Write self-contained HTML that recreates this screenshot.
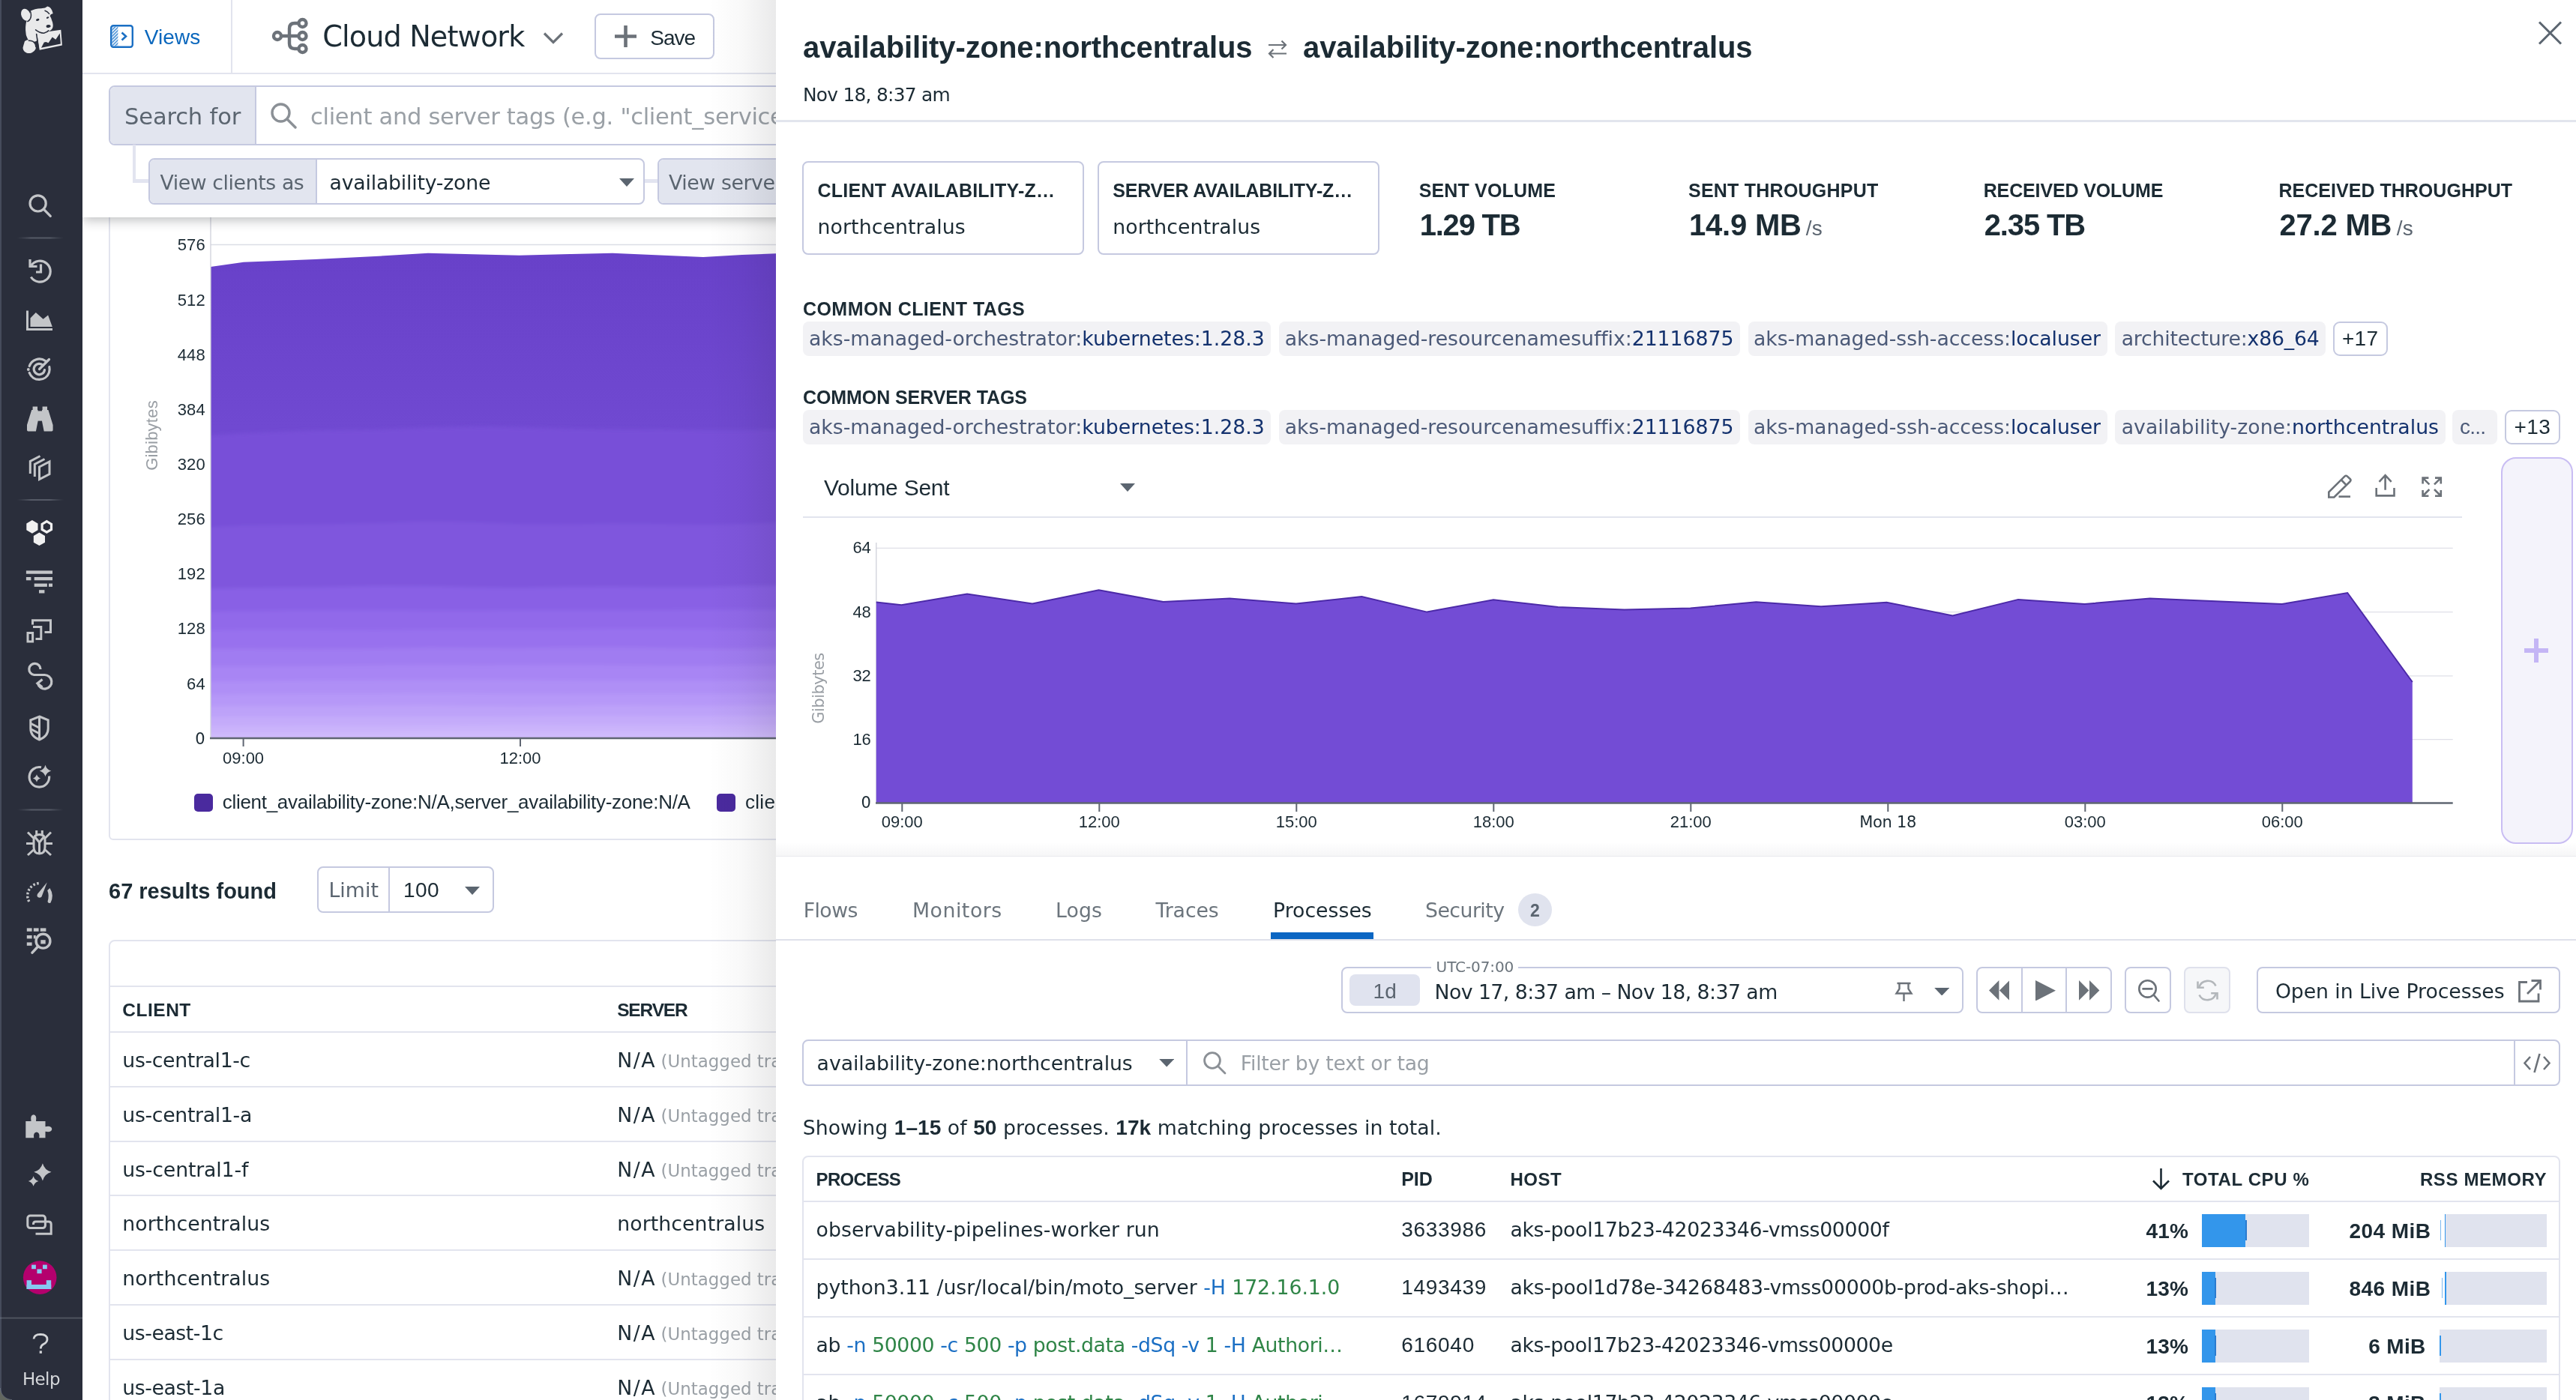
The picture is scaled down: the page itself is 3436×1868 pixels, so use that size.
<!DOCTYPE html>
<html lang="en"><head><meta charset="utf-8"><title>Cloud Network - availability-zone:northcentralus</title>
<style>

html,body{margin:0;padding:0;background:#fff;}
body{width:3436px;height:1868px;overflow:hidden;position:relative;font-family:"DejaVu Sans","Liberation Sans",sans-serif;color:#1c2b34;}
#app{position:absolute;left:0;top:0;width:3436px;height:1868px;overflow:hidden;will-change:transform;}
#app div,#app span.t,#app svg{position:absolute;box-sizing:border-box;}
span.t{white-space:pre;}
span.t span{position:static;}
i.bl{display:inline-block;width:0;height:0;vertical-align:baseline;}
span.t b{font-family:"Liberation Sans",sans-serif;font-size:1.05em;font-weight:700;}
.bd{border:2px solid #c5c9e0;border-radius:8px;background:#fff;}
.lbl{background:#e2e5ef;}
.hl{background:#e2e4ee;height:2px;}
.pill{background:#f2f2f5;border-radius:8px;height:45px;}

</style></head>
<body>
<div id="app">
<div id="main" style="left:110px;top:0;width:925px;height:1868px;overflow:hidden;background:#fff;">
<div style="left:35px;top:270px;width:1400px;height:850.6px;border:2px solid #e2e4ee;border-radius:0 0 6px 6px;background:#fff;"></div>
<svg style="left:0;top:280px" width="925" height="760" viewBox="110 280 925 760"><line x1="281" y1="326.5" x2="1100" y2="326.5" stroke="#dcdde5" stroke-width="1.3"/><defs><linearGradient id="g1" x1="0" y1="0" x2="0" y2="1"><stop offset="0" stop-color="#6841c9"/><stop offset=".36" stop-color="#7049d1"/><stop offset="1" stop-color="#7049d1"/></linearGradient></defs><defs><filter id="bl" x="-5%" y="-5%" width="110%" height="110%"><feGaussianBlur stdDeviation="2.6"/></filter><clipPath id="cc"><rect x="281" y="300" width="800" height="685"/></clipPath></defs><path d="M281.0,356.0 L325.0,349.8 L420.0,346.0 L500.0,342.0 L571.0,337.7 L640.0,339.5 L692.5,340.7 L760.0,339.0 L817.0,337.7 L880.0,340.5 L938.0,343.0 L990.0,340.0 L1040.0,338.0 L1040,985 L281,985 Z" fill="url(#g1)"/><g clip-path="url(#cc)"><g filter="url(#bl)"><path d="M240.0,579.9 L281.0,580.9 L325.0,578.1 L420.0,574.4 L500.0,573.5 L571.0,570.6 L640.0,568.9 L692.5,569.9 L760.0,572.3 L817.0,573.1 L880.0,573.3 L938.0,574.1 L990.0,574.0 L1040.0,573.6 L1090.0,572.0 L1090,1030 L240,1030 Z" fill="#7850d8"/><path d="M240.0,704.7 L281.0,703.7 L325.0,701.2 L420.0,700.3 L500.0,698.6 L571.0,696.1 L640.0,697.6 L692.5,699.7 L760.0,700.0 L817.0,698.9 L880.0,699.4 L938.0,700.7 L990.0,699.6 L1040.0,697.6 L1090.0,696.2 L1090,1030 L240,1030 Z" fill="#7f57dd"/><path d="M240.0,785.9 L281.0,785.5 L325.0,784.5 L420.0,783.8 L500.0,782.1 L571.0,782.3 L640.0,784.1 L692.5,784.4 L760.0,783.3 L817.0,783.0 L880.0,783.8 L938.0,783.7 L990.0,782.0 L1040.0,781.2 L1090.0,781.7 L1090,1030 L240,1030 Z" fill="#8961e5"/><path d="M240.0,816.0 L281.0,816.3 L325.0,815.5 L420.0,814.2 L500.0,814.3 L571.0,815.0 L640.0,815.1 L692.5,814.6 L760.0,814.2 L817.0,814.2 L880.0,814.0 L938.0,813.5 L990.0,813.1 L1040.0,813.6 L1090.0,814.5 L1090,1030 L240,1030 Z" fill="#9169ea"/><path d="M240.0,841.1 L281.0,841.1 L325.0,840.0 L420.0,840.0 L500.0,840.7 L571.0,839.8 L640.0,839.3 L692.5,839.4 L760.0,839.3 L817.0,838.6 L880.0,838.4 L938.0,839.1 L990.0,839.6 L1040.0,839.8 L1090.0,839.7 L1090,1030 L240,1030 Z" fill="#9871ee"/><path d="M240.0,865.9 L281.0,865.7 L325.0,865.2 L420.0,866.0 L500.0,865.3 L571.0,864.1 L640.0,864.3 L692.5,864.5 L760.0,863.8 L817.0,863.4 L880.0,864.3 L938.0,865.3 L990.0,865.2 L1040.0,864.7 L1090.0,864.4 L1090,1030 L240,1030 Z" fill="#a07bf1"/><path d="M240.0,888.8 L281.0,889.0 L325.0,889.0 L420.0,888.6 L500.0,887.5 L571.0,887.1 L640.0,887.4 L692.5,887.2 L760.0,887.0 L817.0,887.4 L880.0,888.2 L938.0,888.4 L990.0,887.8 L1040.0,887.5 L1090.0,887.6 L1090,1030 L240,1030 Z" fill="#a885f4"/><path d="M240.0,909.3 L281.0,909.6 L325.0,909.0 L420.0,907.8 L500.0,907.4 L571.0,907.2 L640.0,907.1 L692.5,907.2 L760.0,907.8 L817.0,908.1 L880.0,908.1 L938.0,907.9 L990.0,907.5 L1040.0,907.5 L1090.0,907.4 L1090,1030 L240,1030 Z" fill="#af8ff6"/><path d="M240.0,927.5 L281.0,927.2 L325.0,926.2 L420.0,925.6 L500.0,925.6 L571.0,925.1 L640.0,925.4 L692.5,926.0 L760.0,926.2 L817.0,925.8 L880.0,925.5 L938.0,925.7 L990.0,925.6 L1040.0,925.2 L1090.0,924.8 L1090,1030 L240,1030 Z" fill="#b698f8"/><path d="M240.0,942.8 L281.0,942.4 L325.0,941.8 L420.0,942.0 L500.0,941.5 L571.0,941.3 L640.0,942.1 L692.5,942.4 L760.0,941.7 L817.0,941.1 L880.0,941.4 L938.0,941.7 L990.0,941.2 L1040.0,940.8 L1090.0,941.0 L1090,1030 L240,1030 Z" fill="#bda2f9"/><path d="M240.0,956.2 L281.0,956.4 L325.0,956.2 L420.0,956.0 L500.0,955.8 L571.0,956.0 L640.0,956.1 L692.5,955.7 L760.0,955.1 L817.0,955.1 L880.0,955.5 L938.0,955.4 L990.0,955.1 L1040.0,955.3 L1090.0,955.9 L1090,1030 L240,1030 Z" fill="#c4abfa"/><path d="M240.0,968.7 L281.0,969.0 L325.0,968.5 L420.0,968.1 L500.0,968.4 L571.0,967.9 L640.0,967.3 L692.5,967.1 L760.0,967.3 L817.0,967.2 L880.0,967.3 L938.0,967.6 L990.0,967.8 L1040.0,968.1 L1090.0,968.1 L1090,1030 L240,1030 Z" fill="#cab3fb"/><path d="M240.0,978.1 L281.0,978.1 L325.0,977.5 L420.0,977.6 L500.0,977.2 L571.0,976.0 L640.0,976.0 L692.5,976.4 L760.0,976.4 L817.0,976.1 L880.0,976.6 L938.0,977.4 L990.0,977.3 L1040.0,976.9 L1090.0,976.4 L1090,1030 L240,1030 Z" fill="#cfbafc"/></g></g><line x1="281" y1="280" x2="281" y2="985" stroke="#cfd1da" stroke-width="1.3"/><line x1="280" y1="985" x2="1100" y2="985" stroke="#5f6672" stroke-width="2.5"/><line x1="324.6" y1="985" x2="324.6" y2="996" stroke="#5f6672" stroke-width="2"/><line x1="694" y1="985" x2="694" y2="996" stroke="#5f6672" stroke-width="2"/></svg>
<span class="t" style='left:126.8px;top:316px;font:400 22.0px/22.0px "Liberation Sans","DejaVu Sans",sans-serif;color:#1c2b34;letter-spacing:0.091px;'>576</span>
<span class="t" style='left:126.8px;top:390px;font:400 22.0px/22.0px "Liberation Sans","DejaVu Sans",sans-serif;color:#1c2b34;letter-spacing:0.091px;'>512</span>
<span class="t" style='left:126.8px;top:463px;font:400 22.0px/22.0px "Liberation Sans","DejaVu Sans",sans-serif;color:#1c2b34;letter-spacing:0.091px;'>448</span>
<span class="t" style='left:126.8px;top:536px;font:400 22.0px/22.0px "Liberation Sans","DejaVu Sans",sans-serif;color:#1c2b34;letter-spacing:0.091px;'>384</span>
<span class="t" style='left:126.8px;top:609px;font:400 22.0px/22.0px "Liberation Sans","DejaVu Sans",sans-serif;color:#1c2b34;letter-spacing:0.091px;'>320</span>
<span class="t" style='left:126.8px;top:682px;font:400 22.0px/22.0px "Liberation Sans","DejaVu Sans",sans-serif;color:#1c2b34;letter-spacing:0.091px;'>256</span>
<span class="t" style='left:126.8px;top:755px;font:400 22.0px/22.0px "Liberation Sans","DejaVu Sans",sans-serif;color:#1c2b34;letter-spacing:0.091px;'>192</span>
<span class="t" style='left:126.8px;top:828px;font:400 22.0px/22.0px "Liberation Sans","DejaVu Sans",sans-serif;color:#1c2b34;letter-spacing:0.091px;'>128</span>
<span class="t" style='left:139.1px;top:902px;font:400 22.0px/22.0px "Liberation Sans","DejaVu Sans",sans-serif;color:#1c2b34;letter-spacing:0.116px;'>64</span>
<span class="t" style='left:150.32px;top:975px;font:400 21.01px/21.01px "DejaVu Sans","Liberation Sans",sans-serif;color:#1c2b34;'>0</span>
<span class="t" style='left:46.45px;top:569.8px;font:400 22.0px/22.0px "Liberation Sans","DejaVu Sans",sans-serif;color:#999ea4;letter-spacing:0.223px;transform:rotate(-90deg);transform-origin:50% 50%;'>Gibibytes</span>
<span class="t" style='left:187.1px;top:1000.6px;font:400 22.0px/22.0px "Liberation Sans","DejaVu Sans",sans-serif;color:#1c2b34;letter-spacing:-0.016px;'>09:00</span>
<span class="t" style='left:556.5px;top:1000.6px;font:400 22.0px/22.0px "Liberation Sans","DejaVu Sans",sans-serif;color:#1c2b34;letter-spacing:-0.016px;'>12:00</span>
<div style="left:149px;top:1059px;width:24.8px;height:23.6px;background:#4a2a9e;border-radius:5px;"></div>
<span class="t" style='left:186.7px;top:1057px;font:400 26.0px/26.0px "Liberation Sans","DejaVu Sans",sans-serif;color:#1c2b34;letter-spacing:-0.284px;'>client_availability-zone:N/A,server_availability-zone:N/A</span>
<div style="left:846px;top:1059px;width:24.8px;height:23.6px;background:#4a2a9e;border-radius:5px;"></div>
<span class="t" style='left:884px;top:1057px;font:400 26.0px/26.0px "Liberation Sans","DejaVu Sans",sans-serif;color:#1c2b34;letter-spacing:0.286px;'>client_availability-zone:northcentralus</span>
<span class="t" style='left:35px;top:1174.8px;font:700 29.0px/29.0px "Liberation Sans","DejaVu Sans",sans-serif;color:#1c2b34;'>67 results found</span>
<div class="bd" style="left:313px;top:1156px;width:236px;height:62px;"></div>
<div style="left:407.5px;top:1158px;width:2px;height:58px;background:#c5c9e0;"></div>
<span class="t" style='left:328.4px;top:1175px;font:400 26.74px/26.74px "DejaVu Sans","Liberation Sans",sans-serif;color:#5b6570;letter-spacing:0.055px;'>Limit</span>
<span class="t" style='left:428px;top:1174px;font:400 28.0px/28.0px "Liberation Sans","DejaVu Sans",sans-serif;color:#1c2b34;letter-spacing:0.391px;'>100</span>
<svg style="left:510px;top:1183px" width="20" height="11" viewBox="0 0 20 11"><path d="M0,0 L20,0 L10,11 Z" fill="#5b6570"/></svg>
<div style="left:35px;top:1253.5px;width:1400px;height:700px;border:2px solid #e2e4ee;border-radius:8px;background:#fff;"></div>
<div style="left:35px;top:1314.6px;width:1400px;height:2px;background:#e2e4ee;"></div>
<span class="t" style='left:53.3px;top:1335.7px;font:700 24.5px/24.5px "Liberation Sans","DejaVu Sans",sans-serif;color:#1c2b34;letter-spacing:0.506px;'>CLIENT</span>
<span class="t" style='left:713.2px;top:1335.7px;font:700 24.5px/24.5px "Liberation Sans","DejaVu Sans",sans-serif;color:#1c2b34;letter-spacing:-1.163px;'>SERVER</span>
<div style="left:35px;top:1376.0px;width:1400px;height:2px;background:#e2e4ee;"></div>
<span class="t" style='left:53.3px;top:1402.0px;font:400 26.74px/26.74px "DejaVu Sans","Liberation Sans",sans-serif;color:#1c2b34;letter-spacing:-0.354px;'>us-central1-c</span>
<span class="t" style='left:713.2px;top:1402.0px;font:400 26.74px/26.74px "DejaVu Sans","Liberation Sans",sans-serif;color:#1c2b34;letter-spacing:1.502px;'>N/A</span>
<span class="t" style='left:771.6px;top:1405.0px;font:400 22.92px/22.92px "DejaVu Sans","Liberation Sans",sans-serif;color:#9aa0a6;'>(Untagged traffic)</span>
<div style="left:35px;top:1448.8px;width:1400px;height:2px;background:#e2e4ee;"></div>
<span class="t" style='left:53.3px;top:1474.8px;font:400 26.74px/26.74px "DejaVu Sans","Liberation Sans",sans-serif;color:#1c2b34;letter-spacing:-0.328px;'>us-central1-a</span>
<span class="t" style='left:713.2px;top:1474.8px;font:400 26.74px/26.74px "DejaVu Sans","Liberation Sans",sans-serif;color:#1c2b34;letter-spacing:1.502px;'>N/A</span>
<span class="t" style='left:771.6px;top:1477.8px;font:400 22.92px/22.92px "DejaVu Sans","Liberation Sans",sans-serif;color:#9aa0a6;'>(Untagged traffic)</span>
<div style="left:35px;top:1521.5px;width:1400px;height:2px;background:#e2e4ee;"></div>
<span class="t" style='left:53.3px;top:1547.5px;font:400 26.74px/26.74px "DejaVu Sans","Liberation Sans",sans-serif;color:#1c2b34;letter-spacing:-0.164px;'>us-central1-f</span>
<span class="t" style='left:713.2px;top:1547.5px;font:400 26.74px/26.74px "DejaVu Sans","Liberation Sans",sans-serif;color:#1c2b34;letter-spacing:1.502px;'>N/A</span>
<span class="t" style='left:771.6px;top:1550.5px;font:400 22.92px/22.92px "DejaVu Sans","Liberation Sans",sans-serif;color:#9aa0a6;'>(Untagged traffic)</span>
<div style="left:35px;top:1594.2px;width:1400px;height:2px;background:#e2e4ee;"></div>
<span class="t" style='left:53.3px;top:1620.2px;font:400 26.74px/26.74px "DejaVu Sans","Liberation Sans",sans-serif;color:#1c2b34;letter-spacing:0.079px;'>northcentralus</span>
<span class="t" style='left:713.2px;top:1620.2px;font:400 26.74px/26.74px "DejaVu Sans","Liberation Sans",sans-serif;color:#1c2b34;letter-spacing:0.079px;'>northcentralus</span>
<div style="left:35px;top:1667.0px;width:1400px;height:2px;background:#e2e4ee;"></div>
<span class="t" style='left:53.3px;top:1693.0px;font:400 26.74px/26.74px "DejaVu Sans","Liberation Sans",sans-serif;color:#1c2b34;letter-spacing:0.079px;'>northcentralus</span>
<span class="t" style='left:713.2px;top:1693.0px;font:400 26.74px/26.74px "DejaVu Sans","Liberation Sans",sans-serif;color:#1c2b34;letter-spacing:1.502px;'>N/A</span>
<span class="t" style='left:771.6px;top:1696.0px;font:400 22.92px/22.92px "DejaVu Sans","Liberation Sans",sans-serif;color:#9aa0a6;'>(Untagged traffic)</span>
<div style="left:35px;top:1739.8px;width:1400px;height:2px;background:#e2e4ee;"></div>
<span class="t" style='left:53.3px;top:1765.8px;font:400 26.74px/26.74px "DejaVu Sans","Liberation Sans",sans-serif;color:#1c2b34;letter-spacing:-0.458px;'>us-east-1c</span>
<span class="t" style='left:713.2px;top:1765.8px;font:400 26.74px/26.74px "DejaVu Sans","Liberation Sans",sans-serif;color:#1c2b34;letter-spacing:1.502px;'>N/A</span>
<span class="t" style='left:771.6px;top:1768.8px;font:400 22.92px/22.92px "DejaVu Sans","Liberation Sans",sans-serif;color:#9aa0a6;'>(Untagged traffic)</span>
<div style="left:35px;top:1812.5px;width:1400px;height:2px;background:#e2e4ee;"></div>
<span class="t" style='left:53.3px;top:1838.5px;font:400 26.74px/26.74px "DejaVu Sans","Liberation Sans",sans-serif;color:#1c2b34;letter-spacing:-0.424px;'>us-east-1a</span>
<span class="t" style='left:713.2px;top:1838.5px;font:400 26.74px/26.74px "DejaVu Sans","Liberation Sans",sans-serif;color:#1c2b34;letter-spacing:1.502px;'>N/A</span>
<span class="t" style='left:771.6px;top:1841.5px;font:400 22.92px/22.92px "DejaVu Sans","Liberation Sans",sans-serif;color:#9aa0a6;'>(Untagged traffic)</span>
<div style="left:0px;top:98px;width:1400px;height:192px;background:#fff;box-shadow:0 3px 15px rgba(20,22,30,.30);"></div>
<div style="left:0px;top:0px;width:1400px;height:99px;background:#fff;border-bottom:2px solid #e2e4ee;"></div>
<div style="left:198px;top:0px;width:2px;height:97px;background:#e2e4ee;"></div>
<svg style="left:37px;top:33px" width="31" height="31" viewBox="0 0 31 31"><defs><pattern id="hp" width="3" height="3" patternUnits="userSpaceOnUse" patternTransform="rotate(45)"><rect width="1.4" height="3" fill="#2b7fd0"/></pattern></defs><rect x="1.2" y="1.2" width="28.6" height="28.6" rx="3" fill="#fff" stroke="#1a6fc4" stroke-width="2.4"/><rect x="2.4" y="2.4" width="8" height="26.2" fill="url(#hp)"/><path d="M15.5,10.5 L21,15.5 L15.5,20.5" fill="none" stroke="#1a6fc4" stroke-width="2.6"/></svg>
<span class="t" style='left:82.7px;top:36.4px;font:400 28.0px/28.0px "Liberation Sans","DejaVu Sans",sans-serif;color:#0a67bd;letter-spacing:0.078px;'>Views</span>
<svg style="left:252px;top:23px" width="51" height="50" viewBox="0 0 51 50" fill="none" stroke="#6c7279" stroke-width="4.4"><circle cx="8" cy="25" r="5"/><circle cx="41.5" cy="8" r="5"/><circle cx="41.5" cy="25" r="5"/><circle cx="41.5" cy="42" r="5"/><path d="M13,25 H36.5 M36.5,8 H31 Q24,8 24,15 V35 Q24,42 31,42 H36.5"/></svg>
<span class="t" style='left:320.3px;top:30.4px;font:400 38.2px/38.2px "DejaVu Sans","Liberation Sans",sans-serif;color:#1c2b34;letter-spacing:-0.889px;'>Cloud Network</span>
<svg style="left:614px;top:42px" width="28" height="18" viewBox="0 0 28 18"><path d="M2,2.5 L14,14.5 L26,2.5" fill="none" stroke="#6c7279" stroke-width="3.2"/></svg>
<div class="bd" style="left:683px;top:18px;width:160px;height:61px;"></div>
<svg style="left:710px;top:34px" width="29" height="29" viewBox="0 0 29 29"><path d="M14.5,0 V29 M0,14.5 H29" stroke="#6c7279" stroke-width="4.6"/></svg>
<span class="t" style='left:757.2px;top:37.1px;font:400 28.0px/28.0px "Liberation Sans","DejaVu Sans",sans-serif;color:#1c2b34;letter-spacing:-0.943px;'>Save</span>
<div class="bd" style="left:35px;top:114px;width:1500px;height:80px;"></div>
<div class="lbl" style="left:37px;top:116px;width:195px;height:76px;border-right:2px solid #c5c9e0;border-radius:6px 0 0 6px;"></div>
<span class="t" style='left:56px;top:141px;font:400 30.56px/30.56px "DejaVu Sans","Liberation Sans",sans-serif;color:#5b6570;letter-spacing:-0.152px;'>Search for</span>
<svg style="left:250px;top:136px" width="36" height="36" viewBox="0 0 36 36" fill="none" stroke="#8b9096" stroke-width="3.4"><circle cx="14.5" cy="14.5" r="11.5"/><path d="M23,23 L34,34" stroke-linecap="round"/></svg>
<span class="t" style='left:304px;top:141px;font:400 30.56px/30.56px "DejaVu Sans","Liberation Sans",sans-serif;color:#9aa0a6;letter-spacing:-0.3px;'>client and server tags (e.g. "client_service:web-store")</span>
<div style="left:66.5px;top:193px;width:4.5px;height:50.5px;background:#e2e4f0;"></div>
<div style="left:66.5px;top:239px;width:22px;height:4.5px;background:#e2e4f0;"></div>
<div style="left:750px;top:239px;width:17px;height:4.5px;background:#e2e4f0;"></div>
<div class="bd" style="left:88px;top:211px;width:662px;height:62px;"></div>
<div class="lbl" style="left:90px;top:213px;width:222.5px;height:58px;border-right:2px solid #c5c9e0;border-radius:6px 0 0 6px;"></div>
<span class="t" style='left:103.4px;top:230.7px;font:400 26.74px/26.74px "DejaVu Sans","Liberation Sans",sans-serif;color:#5b6570;letter-spacing:-0.408px;'>View clients as</span>
<span class="t" style='left:329.6px;top:230.7px;font:400 26.74px/26.74px "DejaVu Sans","Liberation Sans",sans-serif;color:#1c2b34;letter-spacing:-0.221px;'>availability-zone</span>
<svg style="left:716px;top:238px" width="20" height="11" viewBox="0 0 20 11"><path d="M0,0 L20,0 L10,11 Z" fill="#5b6570"/></svg>
<div class="bd" style="left:767px;top:211px;width:662px;height:62px;"></div>
<div class="lbl" style="left:769px;top:213px;width:226.5px;height:58px;border-right:2px solid #c5c9e0;border-radius:6px 0 0 6px;"></div>
<span class="t" style='left:782px;top:230.7px;font:400 26.74px/26.74px "DejaVu Sans","Liberation Sans",sans-serif;color:#5b6570;letter-spacing:-0.401px;'>View servers as</span>
<div style="left:835px;top:0px;width:90px;height:1868px;background:linear-gradient(90deg,rgba(20,20,24,0) 0%,rgba(20,20,24,.028) 50%,rgba(20,20,24,.09) 100%);"></div>
</div>
<div id="nav" style="left:0;top:0;width:110px;height:1868px;background:#2a2e3b;">
<svg style="left:0;top:0" width="110" height="1868" viewBox="0 0 110 1868"><defs><linearGradient id="dv" x1="0" y1="0" x2="1" y2="0"><stop offset="0" stop-color="#4b505c" stop-opacity="0"/><stop offset=".3" stop-color="#555a66"/><stop offset=".7" stop-color="#555a66"/><stop offset="1" stop-color="#4b505c" stop-opacity="0"/></linearGradient></defs><g fill="#e9e9ea"><path d="M40.2,14.8 Q46,11.6 55,11.2 L60.1,10.6 L63.3,8.4 Q66.4,8.8 67.8,11.2 Q70,14 70.7,18 L67.8,19.3 L66.6,21.2 Q68.5,24 69.1,27 Q70.5,30 70.7,33.4 Q70.8,36 69.8,37.9 Q68.5,40 66.6,41.1 L63.3,42.7 L49.4,45.6 L50.4,53.5 Q47.5,55.5 44.5,56 L37.2,52.4 Q34.6,47.5 34.6,45 Q33.8,40 34.1,36 Q34.3,32 35.1,28.9 Q36.5,26.5 38.5,25 Z"/><ellipse cx="34.3" cy="19.8" rx="5.9" ry="8.3" transform="rotate(-22 34.3 19.8)"/><ellipse cx="39.4" cy="63" rx="9" ry="7.8" transform="rotate(-24 39.4 63)"/><path d="M33,55 Q38,51 44.5,55 L48.2,61 L40,66 L31.5,60 Z"/><path d="M49.2,44.3 L81.3,39.8 L82.9,60.4 L52.7,66.8 Z"/></g><path d="M55,63.7 L58.8,56.6 L61.4,55.9 L64.6,57.3 L69.8,49.6 L74.3,52.8 L79.8,44.6 L80.9,58.6 Z" fill="#2a2e3b"/><g fill="none" stroke="#2a2e3b" stroke-width="1.5" stroke-linecap="round"><path d="M40.4,14.9 Q42.4,20 40.6,24.6 Q39.4,27.4 36.8,28.6"/><path d="M47.6,39.8 Q52.5,43.8 58.5,44.2 Q63,43.2 64.8,40.8"/><path d="M38.4,54.3 Q44.2,54 46.6,58 Q47.8,60.2 47.9,62.6"/><path d="M60,14.2 Q63.5,15.2 65.6,18.4"/><path d="M48.6,45.4 L51.5,66"/></g><g fill="#2a2e3b"><ellipse cx="50.2" cy="26.4" rx="2.3" ry="1.5" transform="rotate(-18 50.2 26.4)"/><ellipse cx="63.6" cy="23.6" rx="1.8" ry="1.1" transform="rotate(-25 63.6 23.6)"/><ellipse cx="64.6" cy="35" rx="3" ry="2" transform="rotate(-8 64.6 35)"/></g><g fill="none" stroke="#c3c5c8" stroke-width="3.2" stroke-linecap="round"><circle cx="50.6" cy="271.4" r="10.6"/><path d="M58.5,279.3 L67.3,288.3"/></g><rect x="23" y="316.5" width="62" height="2" fill="url(#dv)"/><rect x="23" y="666" width="62" height="2" fill="url(#dv)"/><rect x="23" y="1079.5" width="62" height="2" fill="url(#dv)"/><g fill="none" stroke="#c3c5c8" stroke-width="3.2"><path d="M41.5,354.5 A14 14 0 1 1 41.3,369.5"/><path d="M40,346 V355.5 H49.5"/><path d="M54.5,352.5 V363 H48"/></g><path d="M36.5,414.5 V439.5 H70" fill="none" stroke="#c3c5c8" stroke-width="3"/><path d="M40.5,424.6 L47.8,417 L57.6,425.8 L64.1,420.6 L69.8,436 L40.5,436 Z" fill="#c3c5c8"/><g fill="none" stroke="#c3c5c8" stroke-width="3.2" stroke-linecap="round"><path d="M60.5,481.5 A14 14 0 0 0 39.2,488.5"/><path d="M39.2,497.5 A14 14 0 0 0 65.5,497 A14 14 0 0 0 65.8,489.5"/><path d="M57.5,487.5 A7.2 7.2 0 1 0 59.5,493.5"/><path d="M52.5,492.5 L65.5,479.5"/></g><circle cx="37.8" cy="493" r="1.9" fill="#c3c5c8"/><g fill="#c3c5c8"><path d="M43.6,542.4 H50 V547 H50.6 V562 L47.9,575.4 H37.4 Q35.8,575.4 36,573.6 V567 L42.2,547 H43.6 Z"/><path d="M63,542.4 H56.6 V547 H56 V562 L58.7,575.4 H69.2 Q70.8,575.4 70.6,573.6 V567 L64.4,547 H63 Z"/><rect x="50" y="548.4" width="6.6" height="13.2"/></g><g fill="none" stroke="#c3c5c8" stroke-width="3"><path d="M40.3,632 V615.5 L53.5,608.5"/><path d="M46.3,636 V619.5 L59.5,612.5"/><path d="M52.5,623 L66,616 V632.5 L52.5,639.5 Z"/></g><polygon points="42.9,694.1 50.5,698.5 50.5,707.3 42.9,711.7 35.3,707.3 35.3,698.5" fill="#f1f1f1"/><polygon points="62.3,695.7 68.5,699.3 68.5,706.5 62.3,710.1 56.1,706.5 56.1,699.3" fill="none" stroke="#f1f1f1" stroke-width="3.2"/><polygon points="52.4,710.5 60.0,714.9 60.0,723.7 52.4,728.1 44.8,723.7 44.8,714.9" fill="#f1f1f1"/><g fill="#c3c5c8"><rect x="34.9" y="761.4" width="35.1" height="4.3"/><rect x="34.9" y="770" width="6.5" height="4.3"/><rect x="45.7" y="770" width="24.3" height="4.3"/><rect x="45.7" y="778.6" width="17.2" height="4.3"/><rect x="65" y="778.6" width="5" height="4.3"/><rect x="52" y="787.2" width="7.4" height="4.3"/></g><g fill="none" stroke="#c3c5c8" stroke-width="3"><path d="M43.5,833.5 V827.8 H67.5 V843.5 H59.5"/><path d="M44,836.5 H54.8 V852.5 H47.5"/><rect x="37" y="844.5" width="6.6" height="11.5"/></g><g fill="none" stroke="#c3c5c8" stroke-width="3.2"><path d="M54,893 A7.6 7.6 0 1 0 45.5,900.5 H59 A9.3 9.3 0 1 1 50.5,912"/><path d="M56.5,906.5 L50,911.8 L56.5,917"/></g><g fill="none" stroke="#c3c5c8" stroke-width="3"><path d="M52.5,956 L64.2,960.8 V972 Q64.2,982.5 52.5,987 Q40.8,982.5 40.8,972 V960.8 Z"/><path d="M52.5,956 V987"/><path d="M41.5,965.5 L52,971 M41.5,973 L52,978.5"/></g><path d="M55,1023.8 A13.3 13.3 0 1 0 65.6,1035.5" fill="none" stroke="#c3c5c8" stroke-width="3.2"/><path d="M60.5,1020.7 Q62.216,1026.784 68.3,1028.5 Q62.216,1030.216 60.5,1036.3 Q58.784,1030.216 52.7,1028.5 Q58.784,1026.784 60.5,1020.7 Z" fill="#c3c5c8"/><path d="M49,1033.3 Q50.144,1037.356 54.2,1038.5 Q50.144,1039.644 49,1043.7 Q47.856,1039.644 43.8,1038.5 Q47.856,1037.356 49,1033.3 Z" fill="#c3c5c8"/><g fill="none" stroke="#c3c5c8" stroke-width="3"><path d="M45,1121 Q45,1113.5 52.5,1113.5 Q60,1113.5 60,1121 V1130 Q60,1139 52.5,1139 Q45,1139 45,1130 Z"/><path d="M46.8,1117 L52.5,1124 L58.2,1117 M52.5,1124 V1139"/><path d="M48.7,1108 V1113.5 M56.3,1108 V1113.5"/><path d="M37,1110.5 L45.5,1119 M68,1110.5 L59.5,1119 M35,1125.5 H45 M60,1125.5 H70 M37,1141 L45.8,1133 M68,1141 L59.2,1133"/></g><path d="M38.8,1203 A16.5 16.5 0 0 1 54,1178.5" fill="none" stroke="#c3c5c8" stroke-width="3.4" stroke-dasharray="2.6 2.4"/><path d="M62.8,1177.3 L55.5,1196.5 Q53,1198.8 50.5,1197 Q48.6,1195 50.3,1192.5 Z" fill="#c3c5c8"/><path d="M66.5,1185 Q72.5,1194.5 67.5,1204.5 Q64.5,1206 63.5,1203 Q66,1195 63.2,1188 Z" fill="#c3c5c8"/><g fill="#c3c5c8"><rect x="35.8" y="1238.4" width="6.8" height="4.4"/><rect x="44.8" y="1238.4" width="6.8" height="4.4"/><rect x="53.8" y="1238.4" width="7.6" height="4.4"/><rect x="35.8" y="1248" width="6.8" height="4.4"/><rect x="44.8" y="1248" width="3" height="4.4"/><rect x="35.8" y="1257.4" width="6.8" height="4.4"/><rect x="54.3" y="1254.2" width="6.4" height="5.2"/></g><g fill="none" stroke="#c3c5c8" stroke-width="3.4" stroke-linecap="round"><circle cx="57.5" cy="1255.7" r="9.4"/><path d="M50.5,1263 L43,1271.2"/></g><path d="M34.3,1496 H41.5 Q40,1488 44.8,1487.3 Q49.5,1488 48,1496 H60.5 V1503.2 Q68.5,1501.5 69.3,1506.5 Q68.5,1511.5 60.5,1509.8 V1518.2 H52.3 Q53.5,1511 48.8,1510.5 Q44,1511 45.2,1518.2 H34.3 Z" fill="#c3c5c8"/><path d="M56.9,1552.2 Q59.452,1561.248 68.5,1563.8 Q59.452,1566.3519999999999 56.9,1575.3999999999999 Q54.348,1566.3519999999999 45.3,1563.8 Q54.348,1561.248 56.9,1552.2 Z" fill="#c3c5c8"/><path d="M44.6,1569.2 Q46.096000000000004,1574.504 51.4,1576 Q46.096000000000004,1577.496 44.6,1582.8 Q43.104,1577.496 37.800000000000004,1576 Q43.104,1574.504 44.6,1569.2 Z" fill="#c3c5c8"/><g fill="none" stroke="#c3c5c8" stroke-width="3"><rect x="36.8" y="1622" width="23.6" height="16.6" rx="3.5"/><path d="M44.5,1634 V1633 Q44.5,1630 47.5,1630 H64.8 Q68.2,1630 68.2,1633.5 V1646.3 H47.5"/></g><circle cx="53.2" cy="1704.6" r="22.3" fill="#b4006d"/><g fill="#86c9f1"><rect x="42.1" y="1687.6" width="5.8" height="5.6"/><rect x="57" y="1687.6" width="5.8" height="5.6"/><rect x="49.4" y="1693.4" width="6.2" height="5.8"/><rect x="35.6" y="1708.2" width="6.4" height="11.8"/><rect x="61.8" y="1708.2" width="6.4" height="11.8"/><rect x="35.6" y="1714" width="32.6" height="6"/></g><rect x="0" y="1757.6" width="110" height="2" fill="#4e535e"/><path d="M45,1786.5 Q45.5,1780.5 54,1780.3 Q63,1780.5 63,1787 Q63,1791 58,1793.5 Q54.3,1795.5 54.3,1799.5" fill="none" stroke="#d3d5d8" stroke-width="2.8"/><rect x="52.7" y="1802.4" width="3.2" height="3.4" fill="#d3d5d8"/></svg>
<span class="t" style='left:29.9px;top:1829.2px;font:400 22.92px/22.92px "DejaVu Sans","Liberation Sans",sans-serif;color:#d6d8db;letter-spacing:-0.545px;'>Help</span>
<div style="left:0;top:0;width:1.5px;height:1868px;background:rgba(140,150,175,.28);"></div>
<div style="left:0;top:1852px;width:16px;height:16px;background:radial-gradient(circle at 16px 0,rgba(0,0,0,0) 14.6px,rgba(130,140,160,.5) 15.4px,#62675f 16.4px);"></div>
</div>
<div id="panel" style="left:1035px;top:0;width:2401px;height:1868px;background:#fff;">
<span class="t" style='left:36px;top:42.8px;font:700 40.0px/40.0px "Liberation Sans","DejaVu Sans",sans-serif;color:#1c2b34;letter-spacing:-0.092px;'>availability-zone:northcentralus</span>
<svg style="left:655px;top:52px" width="28" height="27" viewBox="0 0 28 27" fill="none" stroke="#6c7279" stroke-width="2.2"><path d="M2,8 H25 M19.5,2.5 L25,8 L19.5,13.5"/><path d="M26,19.5 H3 M8.5,14 L3,19.5 L8.5,25"/></svg>
<span class="t" style='left:703px;top:42.8px;font:700 40.0px/40.0px "Liberation Sans","DejaVu Sans",sans-serif;color:#1c2b34;letter-spacing:-0.092px;'>availability-zone:northcentralus</span>
<svg style="left:2349px;top:27px" width="35" height="34" viewBox="0 0 35 34"><path d="M3,2.5 L32,31.5 M32,2.5 L3,31.5" stroke="#5b6570" stroke-width="3"/></svg>
<span class="t" style='left:36px;top:114.6px;font:400 24.83px/24.83px "DejaVu Sans","Liberation Sans",sans-serif;color:#1c2b34;letter-spacing:-0.72px;'>Nov 18, 8:37 am</span>
<div style="left:0px;top:160px;width:2401px;height:3px;background:#e2e5ed;"></div>
<div class="bd" style="left:35px;top:215px;width:376px;height:125px;"></div>
<span class="t" style='left:55.6px;top:242px;font:700 25.0px/25.0px "Liberation Sans","DejaVu Sans",sans-serif;color:#1c2b34;letter-spacing:0.209px;'>CLIENT AVAILABILITY-Z…</span>
<span class="t" style='left:55.6px;top:290.2px;font:400 26.74px/26.74px "DejaVu Sans","Liberation Sans",sans-serif;color:#1c2b34;letter-spacing:0.079px;'>northcentralus</span>
<div class="bd" style="left:429px;top:215px;width:376px;height:125px;"></div>
<span class="t" style='left:449.2px;top:242px;font:700 25.0px/25.0px "Liberation Sans","DejaVu Sans",sans-serif;color:#1c2b34;letter-spacing:-0.196px;'>SERVER AVAILABILITY-Z…</span>
<span class="t" style='left:449.2px;top:290.2px;font:400 26.74px/26.74px "DejaVu Sans","Liberation Sans",sans-serif;color:#1c2b34;letter-spacing:0.079px;'>northcentralus</span>
<span class="t" style='left:857.7px;top:242px;font:700 25.0px/25.0px "Liberation Sans","DejaVu Sans",sans-serif;color:#1c2b34;letter-spacing:0.162px;'>SENT VOLUME</span>
<span class="t" style='left:858.7px;top:280.4px;font:700 40.0px/40.0px "Liberation Sans","DejaVu Sans",sans-serif;color:#1c2b34;letter-spacing:-1.216px;'>1.29 TB</span>
<span class="t" style='left:1217px;top:242px;font:700 25.0px/25.0px "Liberation Sans","DejaVu Sans",sans-serif;color:#1c2b34;letter-spacing:0.236px;'>SENT THROUGHPUT</span>
<span class="t" style='left:1218px;top:280.4px;font:700 40.0px/40.0px "Liberation Sans","DejaVu Sans",sans-serif;color:#1c2b34;letter-spacing:-0.195px;'>14.9 MB</span>
<span class="t" style='left:1373.8px;top:291.4px;font:400 28.0px/28.0px "Liberation Sans","DejaVu Sans",sans-serif;color:#5b6570;letter-spacing:0.219px;'>/s</span>
<span class="t" style='left:1610.7px;top:242px;font:700 25.0px/25.0px "Liberation Sans","DejaVu Sans",sans-serif;color:#1c2b34;letter-spacing:-0.143px;'>RECEIVED VOLUME</span>
<span class="t" style='left:1611.7px;top:280.4px;font:700 40.0px/40.0px "Liberation Sans","DejaVu Sans",sans-serif;color:#1c2b34;letter-spacing:-1.133px;'>2.35 TB</span>
<span class="t" style='left:2004.5px;top:242px;font:700 25.0px/25.0px "Liberation Sans","DejaVu Sans",sans-serif;color:#1c2b34;letter-spacing:0.02px;'>RECEIVED THROUGHPUT</span>
<span class="t" style='left:2005.5px;top:280.4px;font:700 40.0px/40.0px "Liberation Sans","DejaVu Sans",sans-serif;color:#1c2b34;letter-spacing:-0.195px;'>27.2 MB</span>
<span class="t" style='left:2161.8px;top:291.4px;font:400 28.0px/28.0px "Liberation Sans","DejaVu Sans",sans-serif;color:#5b6570;letter-spacing:0.219px;'>/s</span>
<span class="t" style='left:36px;top:399.6px;font:700 25.0px/25.0px "Liberation Sans","DejaVu Sans",sans-serif;color:#1c2b34;letter-spacing:0.435px;'>COMMON CLIENT TAGS</span>
<div class="pill" style="left:36px;top:429px;width:624px;height:46px;"></div>
<span class="t" style='left:44px;top:439.2px;font:400 26.74px/26.74px "DejaVu Sans","Liberation Sans",sans-serif;color:#1c2b34;letter-spacing:-0.019px;'><span style="color:#4c5a78">aks-managed-orchestrator:</span><span style="color:#14326e">kubernetes:1.28.3</span></span>
<div class="pill" style="left:670.5px;top:429px;width:615.5px;height:46px;"></div>
<span class="t" style='left:678.8px;top:439.2px;font:400 26.74px/26.74px "DejaVu Sans","Liberation Sans",sans-serif;color:#1c2b34;letter-spacing:-0.056px;'><span style="color:#4c5a78">aks-managed-resourcenamesuffix:</span><span style="color:#14326e">21116875</span></span>
<div class="pill" style="left:1296.6px;top:429px;width:479.4px;height:46px;"></div>
<span class="t" style='left:1304px;top:439.2px;font:400 26.74px/26.74px "DejaVu Sans","Liberation Sans",sans-serif;color:#1c2b34;letter-spacing:-0.077px;'><span style="color:#4c5a78">aks-managed-ssh-access:</span><span style="color:#14326e">localuser</span></span>
<div class="pill" style="left:1786px;top:429px;width:281px;height:46px;"></div>
<span class="t" style='left:1794.7px;top:439.2px;font:400 26.74px/26.74px "DejaVu Sans","Liberation Sans",sans-serif;color:#1c2b34;letter-spacing:-0.223px;'><span style="color:#4c5a78">architecture:</span><span style="color:#14326e">x86_64</span></span>
<div class="bd" style="left:2077px;top:429px;width:73px;height:46px;border-radius:9px;"></div>
<span class="t" style='left:2089px;top:438.2px;font:400 28.0px/28.0px "Liberation Sans","DejaVu Sans",sans-serif;color:#1c2b34;letter-spacing:0.25px;'>+17</span>
<span class="t" style='left:36px;top:518px;font:700 25.0px/25.0px "Liberation Sans","DejaVu Sans",sans-serif;color:#1c2b34;letter-spacing:-0.088px;'>COMMON SERVER TAGS</span>
<div class="pill" style="left:36px;top:547px;width:624px;height:46px;"></div>
<span class="t" style='left:44px;top:557.2px;font:400 26.74px/26.74px "DejaVu Sans","Liberation Sans",sans-serif;color:#1c2b34;letter-spacing:-0.019px;'><span style="color:#4c5a78">aks-managed-orchestrator:</span><span style="color:#14326e">kubernetes:1.28.3</span></span>
<div class="pill" style="left:670.5px;top:547px;width:615.5px;height:46px;"></div>
<span class="t" style='left:678.8px;top:557.2px;font:400 26.74px/26.74px "DejaVu Sans","Liberation Sans",sans-serif;color:#1c2b34;letter-spacing:-0.056px;'><span style="color:#4c5a78">aks-managed-resourcenamesuffix:</span><span style="color:#14326e">21116875</span></span>
<div class="pill" style="left:1296.6px;top:547px;width:479.4px;height:46px;"></div>
<span class="t" style='left:1304px;top:557.2px;font:400 26.74px/26.74px "DejaVu Sans","Liberation Sans",sans-serif;color:#1c2b34;letter-spacing:-0.077px;'><span style="color:#4c5a78">aks-managed-ssh-access:</span><span style="color:#14326e">localuser</span></span>
<div class="pill" style="left:1786px;top:547px;width:441px;height:46px;"></div>
<span class="t" style='left:1794.7px;top:557.2px;font:400 26.74px/26.74px "DejaVu Sans","Liberation Sans",sans-serif;color:#1c2b34;'><span style="color:#4c5a78">availability-zone:</span><span style="color:#14326e">northcentralus</span></span>
<div class="pill" style="left:2236px;top:547px;width:60px;height:46px;"></div>
<span class="t" style='left:2246px;top:556.2px;font:400 28.0px/28.0px "Liberation Sans","DejaVu Sans",sans-serif;color:#1c2b34;letter-spacing:-0.781px;'><span style="color:#4c5a78">c...</span><span style="color:#14326e"></span></span>
<div class="bd" style="left:2306px;top:547px;width:73.5px;height:46px;border-radius:9px;"></div>
<span class="t" style='left:2318.6px;top:556.2px;font:400 28.0px/28.0px "Liberation Sans","DejaVu Sans",sans-serif;color:#1c2b34;letter-spacing:0.35px;'>+13</span>
<span class="t" style='left:64px;top:635.5px;font:400 30.0px/30.0px "Liberation Sans","DejaVu Sans",sans-serif;color:#1c2b34;letter-spacing:-0.253px;'>Volume Sent</span>
<svg style="left:458.5px;top:645px" width="20" height="11" viewBox="0 0 20 11"><path d="M0,0 L20,0 L10,11 Z" fill="#5b6570"/></svg>
<svg style="left:2069px;top:631px" width="34" height="36" viewBox="0 0 34 36" fill="none" stroke="#6c7279" stroke-width="2.6"><path d="M2.3,32.5 V25.5 L23.4,4.6 Q25.2,2.9 27,4.6 L30.6,8 Q32.3,9.8 30.6,11.5 L9.3,32.5 Z M19.6,10 L26,16.6"/><path d="M15.5,31.6 H31"/></svg>
<svg style="left:2130px;top:631px" width="34" height="36" viewBox="0 0 34 36" fill="none" stroke="#6c7279" stroke-width="2.6"><path d="M4.7,20 V30.4 H28.5 V20"/><path d="M16.6,22.8 V3.4 M8.5,11.8 L16.6,3.2 L24.7,11.8"/></svg>
<svg style="left:2193.8px;top:635px" width="29.4" height="29.4" viewBox="0 0 29.4 29.4" fill="none" stroke="#6c7279" stroke-width="2.6"><path d="M2.6,10.4 V2.6 H10.4 M2.6,2.6 L11.4,11.4"/><path d="M19,2.6 H26.8 V10.4 M26.8,2.6 L18,11.4"/><path d="M2.6,19 V26.8 H10.4 M2.6,26.8 L11.4,18"/><path d="M19,26.8 H26.8 V19 M26.8,26.8 L18,18"/></svg>
<div style="left:36px;top:688.5px;width:2212.5px;height:2px;background:#e2e4ee;"></div>
<svg style="left:125px;top:700px" width="2130" height="400" viewBox="1160 700 2130 400"><line x1="1169" y1="731.4" x2="3271.7" y2="731.4" stroke="#dfe0e8" stroke-width="1.3"/><line x1="1169" y1="816.6" x2="3271.7" y2="816.6" stroke="#dfe0e8" stroke-width="1.3"/><line x1="1169" y1="901.9" x2="3271.7" y2="901.9" stroke="#dfe0e8" stroke-width="1.3"/><line x1="1169" y1="986.6" x2="3271.7" y2="986.6" stroke="#dfe0e8" stroke-width="1.3"/><line x1="1168.8" y1="724" x2="1168.8" y2="1071" stroke="#cfd1da" stroke-width="1.3"/><path d="M1168.8,803.6 L1202.4,807.3 L1290,792.4 L1377,805.4 L1465.6,787.3 L1551.7,803.1 L1640.2,798.4 L1728.8,805.4 L1816.3,796.1 L1903.4,816.6 L1992,800.3 L2078.1,810.1 L2166.6,813.4 L2254.8,811.6 L2342.4,803.2 L2429,809.3 L2516.5,803.7 L2604.5,821.4 L2692,799.9 L2780.6,806 L2867.6,798.5 L2955.7,802.2 L3043.7,806 L3131.2,791 L3217.8,910 L3217.8,1071 L1168.8,1071 Z" fill="#734cd5"/><path d="M1168.8,803.6 L1202.4,807.3 L1290,792.4 L1377,805.4 L1465.6,787.3 L1551.7,803.1 L1640.2,798.4 L1728.8,805.4 L1816.3,796.1 L1903.4,816.6 L1992,800.3 L2078.1,810.1 L2166.6,813.4 L2254.8,811.6 L2342.4,803.2 L2429,809.3 L2516.5,803.7 L2604.5,821.4 L2692,799.9 L2780.6,806 L2867.6,798.5 L2955.7,802.2 L3043.7,806 L3131.2,791 L3217.8,910" fill="none" stroke="#4c2aa8" stroke-width="2"/><line x1="1168" y1="1071.4" x2="3271.7" y2="1071.4" stroke="#5f6672" stroke-width="2.5"/><line x1="1203.3" y1="1071" x2="1203.3" y2="1083" stroke="#5f6672" stroke-width="2"/><line x1="1466.3" y1="1071" x2="1466.3" y2="1083" stroke="#5f6672" stroke-width="2"/><line x1="1729.3" y1="1071" x2="1729.3" y2="1083" stroke="#5f6672" stroke-width="2"/><line x1="1992.3" y1="1071" x2="1992.3" y2="1083" stroke="#5f6672" stroke-width="2"/><line x1="2255.3" y1="1071" x2="2255.3" y2="1083" stroke="#5f6672" stroke-width="2"/><line x1="2518.3" y1="1071" x2="2518.3" y2="1083" stroke="#5f6672" stroke-width="2"/><line x1="2781.3" y1="1071" x2="2781.3" y2="1083" stroke="#5f6672" stroke-width="2"/><line x1="3044.3" y1="1071" x2="3044.3" y2="1083" stroke="#5f6672" stroke-width="2"/></svg>
<span class="t" style='left:102.6px;top:720.4px;font:400 22.0px/22.0px "Liberation Sans","DejaVu Sans",sans-serif;color:#1c2b34;letter-spacing:-0.284px;'>64</span>
<span class="t" style='left:102.6px;top:805.6px;font:400 22.0px/22.0px "Liberation Sans","DejaVu Sans",sans-serif;color:#1c2b34;letter-spacing:-0.284px;'>48</span>
<span class="t" style='left:102.6px;top:890.9px;font:400 22.0px/22.0px "Liberation Sans","DejaVu Sans",sans-serif;color:#1c2b34;letter-spacing:-0.284px;'>32</span>
<span class="t" style='left:102.6px;top:975.6px;font:400 22.0px/22.0px "Liberation Sans","DejaVu Sans",sans-serif;color:#1c2b34;letter-spacing:-0.284px;'>16</span>
<span class="t" style='left:113.42px;top:1060.4px;font:400 21.01px/21.01px "DejaVu Sans","Liberation Sans",sans-serif;color:#1c2b34;'>0</span>
<span class="t" style='left:8.5px;top:908.3px;font:400 21.01px/21.01px "DejaVu Sans","Liberation Sans",sans-serif;color:#999ea4;letter-spacing:-0.516px;transform:rotate(-90deg);transform-origin:50% 50%;'>Gibibytes</span>
<span class="t" style='left:140.8px;top:1086px;font:400 22.0px/22.0px "Liberation Sans","DejaVu Sans",sans-serif;color:#1c2b34;letter-spacing:-0.016px;'>09:00</span>
<span class="t" style='left:403.8px;top:1086px;font:400 22.0px/22.0px "Liberation Sans","DejaVu Sans",sans-serif;color:#1c2b34;letter-spacing:-0.016px;'>12:00</span>
<span class="t" style='left:666.8px;top:1086px;font:400 22.0px/22.0px "Liberation Sans","DejaVu Sans",sans-serif;color:#1c2b34;letter-spacing:-0.016px;'>15:00</span>
<span class="t" style='left:929.8px;top:1086px;font:400 22.0px/22.0px "Liberation Sans","DejaVu Sans",sans-serif;color:#1c2b34;letter-spacing:-0.016px;'>18:00</span>
<span class="t" style='left:1192.8px;top:1086px;font:400 22.0px/22.0px "Liberation Sans","DejaVu Sans",sans-serif;color:#1c2b34;letter-spacing:-0.016px;'>21:00</span>
<span class="t" style='left:1445.3px;top:1086px;font:400 21.01px/21.01px "DejaVu Sans","Liberation Sans",sans-serif;color:#1c2b34;letter-spacing:-0.338px;'>Mon 18</span>
<span class="t" style='left:1718.8px;top:1086px;font:400 22.0px/22.0px "Liberation Sans","DejaVu Sans",sans-serif;color:#1c2b34;letter-spacing:-0.016px;'>03:00</span>
<span class="t" style='left:1981.8px;top:1086px;font:400 22.0px/22.0px "Liberation Sans","DejaVu Sans",sans-serif;color:#1c2b34;letter-spacing:-0.016px;'>06:00</span>
<div style="left:2301px;top:610px;width:96px;height:516px;background:#f4f3fb;border:2px solid #c9bdf3;border-radius:20px;"></div>
<svg style="left:2332px;top:852px" width="32" height="32" viewBox="0 0 32 32"><path d="M16,0 V32 M0,16 H32" stroke="#c4b5f5" stroke-width="6"/></svg>
<div style="left:0px;top:1124px;width:2401px;height:18px;background:linear-gradient(180deg,rgba(40,44,60,0) 0%,rgba(40,44,60,.045) 100%);"></div>
<div style="left:0px;top:1141.5px;width:2401px;height:1.5px;background:#e9eaee;"></div>
<span class="t" style='left:36.7px;top:1201.5px;font:400 26.74px/26.74px "DejaVu Sans","Liberation Sans",sans-serif;color:#6c757d;letter-spacing:-0.567px;'>Flows</span>
<span class="t" style='left:182px;top:1201.5px;font:400 26.74px/26.74px "DejaVu Sans","Liberation Sans",sans-serif;color:#6c757d;letter-spacing:0.52px;'>Monitors</span>
<span class="t" style='left:373px;top:1201.5px;font:400 26.74px/26.74px "DejaVu Sans","Liberation Sans",sans-serif;color:#6c757d;letter-spacing:0.104px;'>Logs</span>
<span class="t" style='left:506.4px;top:1201.5px;font:400 26.74px/26.74px "DejaVu Sans","Liberation Sans",sans-serif;color:#6c757d;letter-spacing:-0.092px;'>Traces</span>
<span class="t" style='left:663px;top:1201.5px;font:400 26.74px/26.74px "DejaVu Sans","Liberation Sans",sans-serif;color:#1c2b34;'>Processes</span>
<span class="t" style='left:866px;top:1201.5px;font:400 26.74px/26.74px "DejaVu Sans","Liberation Sans",sans-serif;color:#6c757d;letter-spacing:-0.542px;'>Security</span>
<div style="left:990px;top:1191.5px;width:44.5px;height:44.5px;background:#e0e3ee;border-radius:50%;"></div>
<span class="t" style='left:1005.9px;top:1203.5px;font:700 23.0px/23.0px "Liberation Sans","DejaVu Sans",sans-serif;color:#5b6570;'>2</span>
<div style="left:0px;top:1252.8px;width:2401px;height:2px;background:#dfe1ea;"></div>
<div style="left:659.8px;top:1244px;width:137.4px;height:9px;background:#0b66c3;"></div>
<div class="bd" style="left:754px;top:1290px;width:830px;height:62px;"></div>
<div style="left:874px;top:1288px;width:116px;height:8px;background:#fff;"></div>
<span class="t" style='left:880.6px;top:1279.7px;font:400 20.05px/20.05px "DejaVu Sans","Liberation Sans",sans-serif;color:#6c757d;letter-spacing:-0.121px;'>UTC-07:00</span>
<div style="left:764.5px;top:1300px;width:94px;height:42px;background:#e0e3ef;border-radius:8px;"></div>
<span class="t" style='left:796.4px;top:1308.6px;font:400 28.0px/28.0px "Liberation Sans","DejaVu Sans",sans-serif;color:#5b6570;letter-spacing:0.244px;'>1d</span>
<span class="t" style='left:878.5px;top:1310.7px;font:400 26.74px/26.74px "DejaVu Sans","Liberation Sans",sans-serif;color:#1c2b34;letter-spacing:-0.562px;'>Nov 17, 8:37 am – Nov 18, 8:37 am</span>
<svg style="left:1491.5px;top:1309.5px" width="25" height="27" viewBox="0 0 25 27" fill="none" stroke="#6c7279" stroke-width="2.4"><path d="M3.5,2 H21.5 M6.5,2 V9.5 L2.5,15.5 H22.5 L18.5,9.5 V2 M12.5,15.5 V26"/></svg>
<svg style="left:1545px;top:1317.7px" width="20.4" height="10.5" viewBox="0 0 20 10.5"><path d="M0,0 L20,0 L10,10.5 Z" fill="#5b6570"/></svg>
<div class="bd" style="left:1601px;top:1290px;width:181px;height:62px;"></div>
<div style="left:1661px;top:1292px;width:2px;height:58px;background:#c5c9e0;"></div>
<div style="left:1720.3px;top:1292px;width:2px;height:58px;background:#c5c9e0;"></div>
<svg style="left:1617.5px;top:1308.3px" width="27.4" height="26.8" viewBox="0 0 27.4 26.8" fill="#6c7279"><path d="M13.4,0 V26.8 L0,13.4 Z M27.4,0 V26.8 L14,13.4 Z"/></svg>
<svg style="left:1679.5px;top:1307.8px" width="27" height="27.6" viewBox="0 0 27 27.6" fill="#6c7279"><path d="M0,0 L27,13.8 L0,27.6 Z"/></svg>
<svg style="left:1738.4px;top:1308.3px" width="27.4" height="26.8" viewBox="0 0 27.4 26.8" fill="#6c7279"><path d="M0,0 L13.4,13.4 L0,26.8 Z M14,0 L27.4,13.4 L14,26.8 Z"/></svg>
<div class="bd" style="left:1799px;top:1290px;width:62px;height:62px;"></div>
<svg style="left:1815px;top:1305px" width="32" height="33" viewBox="0 0 32 33" fill="none" stroke="#6c7279" stroke-width="2.6"><circle cx="14.5" cy="14.4" r="11.2"/><path d="M8.5,14.4 H20.5 M22.8,22.7 L29.5,30.5" stroke-linecap="round"/></svg>
<div class="bd" style="left:1878px;top:1290px;width:62px;height:62px;background:#f6f7f9;border-color:#dfe1ec;"></div>
<svg style="left:1893px;top:1305px" width="33" height="33" viewBox="0 0 33 33" fill="none" stroke="#b3b7bb" stroke-width="2.6"><path d="M5.2,12.5 A12 12 0 0 1 27.5,10.5 M27.8,20.5 A12 12 0 0 1 5.5,22.5"/><path d="M3.5,4.5 V12.8 H11.8 M29.5,28.5 V20.2 H21.2"/></svg>
<div class="bd" style="left:1975px;top:1290px;width:405px;height:62px;"></div>
<span class="t" style='left:1999.9px;top:1310px;font:400 26.74px/26.74px "DejaVu Sans","Liberation Sans",sans-serif;color:#1c2b34;letter-spacing:-0.093px;'>Open in Live Processes</span>
<svg style="left:2322.5px;top:1305.5px" width="33" height="33" viewBox="0 0 33 33" fill="none" stroke="#6c7279" stroke-width="2.8"><path d="M13,4.5 H2.5 V30 H28 V19.5"/><path d="M18.5,2.5 H30.5 V14.5 M30,3 L13,20"/></svg>
<div class="bd" style="left:35px;top:1387px;width:2345px;height:62px;"></div>
<div style="left:546.6px;top:1389px;width:2px;height:58px;background:#c5c9e0;"></div>
<div style="left:2318px;top:1389px;width:2px;height:58px;background:#c5c9e0;"></div>
<span class="t" style='left:54.6px;top:1405.7px;font:400 26.74px/26.74px "DejaVu Sans","Liberation Sans",sans-serif;color:#1c2b34;letter-spacing:-0.068px;'>availability-zone:northcentralus</span>
<svg style="left:510.6px;top:1413px" width="20.4" height="10.5" viewBox="0 0 20 10.5"><path d="M0,0 L20,0 L10,10.5 Z" fill="#5b6570"/></svg>
<svg style="left:569px;top:1402px" width="32" height="32" viewBox="0 0 32 32" fill="none" stroke="#8b9096" stroke-width="2.8"><circle cx="13" cy="13" r="10.4"/><path d="M20.5,20.5 L30,30" stroke-linecap="round"/></svg>
<span class="t" style='left:619.8px;top:1405.7px;font:400 26.74px/26.74px "DejaVu Sans","Liberation Sans",sans-serif;color:#9aa0a6;letter-spacing:-0.248px;'>Filter by text or tag</span>
<svg style="left:2331px;top:1404.5px" width="36" height="27" viewBox="0 0 36 27" fill="none" stroke="#6c7279" stroke-width="2.6"><path d="M9,5 L1.5,13.5 L9,22 M27,5 L34.5,13.5 L27,22 M21.5,1 L14.5,26"/></svg>
<span class="t" style='left:35.7px;top:1492px;font:400 26.74px/26.74px "DejaVu Sans","Liberation Sans",sans-serif;color:#1c2b34;letter-spacing:0.019px;'>Showing <b>1–15</b> of <b>50</b> processes. <b>17k</b> matching processes in total.</span>
<div style="left:35px;top:1542px;width:2345px;height:400px;border:2px solid #e2e4ee;border-radius:8px;background:#fff;"></div>
<span class="t" style='left:53.6px;top:1561.9px;font:700 24.0px/24.0px "Liberation Sans","DejaVu Sans",sans-serif;color:#1c2b34;letter-spacing:-0.696px;'>PROCESS</span>
<span class="t" style='left:834.2px;top:1560.9px;font:700 25.0px/25.0px "Liberation Sans","DejaVu Sans",sans-serif;color:#1c2b34;'>PID</span>
<span class="t" style='left:979.4px;top:1561.9px;font:700 24.0px/24.0px "Liberation Sans","DejaVu Sans",sans-serif;color:#1c2b34;letter-spacing:0.543px;'>HOST</span>
<svg style="left:1834.5px;top:1557.5px" width="25" height="30" viewBox="0 0 25 30" fill="none" stroke="#1c2b34" stroke-width="2.6"><path d="M12.5,1 V27 M2,17.5 L12.5,28 L23,17.5"/></svg>
<span class="t" style='left:1876px;top:1561.9px;font:700 24.0px/24.0px "Liberation Sans","DejaVu Sans",sans-serif;color:#1c2b34;letter-spacing:0.611px;'>TOTAL CPU %</span>
<span class="t" style='left:2192.9px;top:1561.9px;font:700 24.0px/24.0px "Liberation Sans","DejaVu Sans",sans-serif;color:#1c2b34;letter-spacing:0.619px;'>RSS MEMORY</span>
<div style="left:37px;top:1602.2px;width:2341px;height:2px;background:#e2e4ee;"></div>
<span class="t" style='left:53.6px;top:1628.2px;font:400 26.74px/26.74px "DejaVu Sans","Liberation Sans",sans-serif;color:#1c2b34;letter-spacing:0.071px;'>observability-pipelines-worker run</span>
<span class="t" style='left:834.2px;top:1627.2px;font:400 28.0px/28.0px "Liberation Sans","DejaVu Sans",sans-serif;color:#1c2b34;letter-spacing:0.696px;'>3633986</span>
<span class="t" style='left:979.4px;top:1628.2px;font:400 26.74px/26.74px "DejaVu Sans","Liberation Sans",sans-serif;color:#1c2b34;letter-spacing:-0.34px;'>aks-pool17b23-42023346-vmss00000f</span>
<span class="t" style='left:1827.6px;top:1628.7px;font:700 28.0px/28.0px "Liberation Sans","DejaVu Sans",sans-serif;color:#1c2b34;letter-spacing:0.177px;'>41%</span>
<div style="left:1901.9px;top:1620.2px;width:142.9px;height:43.5px;background:#e0e3ee;"></div>
<div style="left:1901.9px;top:1620.2px;width:58.6px;height:43.5px;background:#3396eb;"></div>
<div style="left:1959.99px;top:1628.2px;width:2px;height:27px;background:#2a7cd0;"></div>
<span class="t" style='left:2098.5px;top:1628.7px;font:700 28.0px/28.0px "Liberation Sans","DejaVu Sans",sans-serif;color:#1c2b34;letter-spacing:0.445px;'>204 MiB</span>
<div style="left:2225.6px;top:1620.2px;width:136px;height:43.5px;background:#e0e3ee;"></div>
<div style="left:2219.8px;top:1628.2px;width:1.6px;height:27px;background:#7db9ef;"></div>
<div style="left:2225.6px;top:1620.2px;width:1.2px;height:43.5px;background:#3396eb;"></div>
<div style="left:37px;top:1679.1px;width:2341px;height:2px;background:#e2e4ee;"></div>
<span class="t" style='left:53.6px;top:1705.1px;font:400 26.74px/26.74px "DejaVu Sans","Liberation Sans",sans-serif;color:#1c2b34;letter-spacing:-0.06px;'>python3.11 /usr/local/bin/moto_server <span style="color:#1b6fc4">-H</span><span style="color:#2f8547"> 172.16.1.0</span></span>
<span class="t" style='left:834.2px;top:1704.1px;font:400 28.0px/28.0px "Liberation Sans","DejaVu Sans",sans-serif;color:#1c2b34;letter-spacing:0.696px;'>1493439</span>
<span class="t" style='left:979.4px;top:1705.1px;font:400 26.74px/26.74px "DejaVu Sans","Liberation Sans",sans-serif;color:#1c2b34;letter-spacing:-0.246px;'>aks-pool1d78e-34268483-vmss00000b-prod-aks-shopi…</span>
<span class="t" style='left:1827.6px;top:1705.6px;font:700 28.0px/28.0px "Liberation Sans","DejaVu Sans",sans-serif;color:#1c2b34;letter-spacing:0.177px;'>13%</span>
<div style="left:1901.9px;top:1697.1px;width:142.9px;height:43.5px;background:#e0e3ee;"></div>
<div style="left:1901.9px;top:1697.1px;width:18.0px;height:43.5px;background:#3396eb;"></div>
<div style="left:1919.41px;top:1705.1px;width:2px;height:27px;background:#2a7cd0;"></div>
<span class="t" style='left:2098.5px;top:1705.6px;font:700 28.0px/28.0px "Liberation Sans","DejaVu Sans",sans-serif;color:#1c2b34;letter-spacing:0.445px;'>846 MiB</span>
<div style="left:2225.6px;top:1697.1px;width:136px;height:43.5px;background:#e0e3ee;"></div>
<div style="left:2221.8px;top:1705.1px;width:1.6px;height:27px;background:#7db9ef;"></div>
<div style="left:2225.6px;top:1697.1px;width:2.2px;height:43.5px;background:#3396eb;"></div>
<div style="left:37px;top:1756.0px;width:2341px;height:2px;background:#e2e4ee;"></div>
<span class="t" style='left:53.6px;top:1782.0px;font:400 26.74px/26.74px "DejaVu Sans","Liberation Sans",sans-serif;color:#1c2b34;letter-spacing:-0.401px;'>ab <span style="color:#1b6fc4">-n</span><span style="color:#2f8547"> 50000 </span><span style="color:#1b6fc4">-c</span><span style="color:#2f8547"> 500 </span><span style="color:#1b6fc4">-p</span><span style="color:#2f8547"> post.data </span><span style="color:#1b6fc4">-dSq</span> <span style="color:#1b6fc4">-v</span><span style="color:#2f8547"> 1 </span><span style="color:#1b6fc4">-H</span><span style="color:#2f8547"> Authori…</span></span>
<span class="t" style='left:834.2px;top:1781.0px;font:400 28.0px/28.0px "Liberation Sans","DejaVu Sans",sans-serif;color:#1c2b34;letter-spacing:0.717px;'>616040</span>
<span class="t" style='left:979.4px;top:1782.0px;font:400 26.74px/26.74px "DejaVu Sans","Liberation Sans",sans-serif;color:#1c2b34;letter-spacing:-0.395px;'>aks-pool17b23-42023346-vmss00000e</span>
<span class="t" style='left:1827.6px;top:1782.5px;font:700 28.0px/28.0px "Liberation Sans","DejaVu Sans",sans-serif;color:#1c2b34;letter-spacing:0.177px;'>13%</span>
<div style="left:1901.9px;top:1774.0px;width:142.9px;height:43.5px;background:#e0e3ee;"></div>
<div style="left:1901.9px;top:1774.0px;width:18.0px;height:43.5px;background:#3396eb;"></div>
<div style="left:1919.41px;top:1782.0px;width:2px;height:27px;background:#2a7cd0;"></div>
<span class="t" style='left:2124.3px;top:1782.5px;font:700 28.0px/28.0px "Liberation Sans","DejaVu Sans",sans-serif;color:#1c2b34;letter-spacing:0.328px;'>6 MiB</span>
<div style="left:2219.3px;top:1774.0px;width:142.3px;height:43.5px;background:#e0e3ee;"></div>
<div style="left:2219.3px;top:1782.0px;width:1.8px;height:27px;background:#3396eb;"></div>
<div style="left:37px;top:1832.9px;width:2341px;height:2px;background:#e2e4ee;"></div>
<span class="t" style='left:53.6px;top:1858.9px;font:400 26.74px/26.74px "DejaVu Sans","Liberation Sans",sans-serif;color:#1c2b34;letter-spacing:-0.401px;'>ab <span style="color:#1b6fc4">-n</span><span style="color:#2f8547"> 50000 </span><span style="color:#1b6fc4">-c</span><span style="color:#2f8547"> 500 </span><span style="color:#1b6fc4">-p</span><span style="color:#2f8547"> post.data </span><span style="color:#1b6fc4">-dSq</span> <span style="color:#1b6fc4">-v</span><span style="color:#2f8547"> 1 </span><span style="color:#1b6fc4">-H</span><span style="color:#2f8547"> Authori…</span></span>
<span class="t" style='left:834.2px;top:1857.9px;font:400 28.0px/28.0px "Liberation Sans","DejaVu Sans",sans-serif;color:#1c2b34;letter-spacing:0.696px;'>1679914</span>
<span class="t" style='left:979.4px;top:1858.9px;font:400 26.74px/26.74px "DejaVu Sans","Liberation Sans",sans-serif;color:#1c2b34;letter-spacing:-0.395px;'>aks-pool17b23-42023346-vmss00000e</span>
<span class="t" style='left:1827.6px;top:1859.4px;font:700 28.0px/28.0px "Liberation Sans","DejaVu Sans",sans-serif;color:#1c2b34;letter-spacing:0.177px;'>13%</span>
<div style="left:1901.9px;top:1850.9px;width:142.9px;height:43.5px;background:#e0e3ee;"></div>
<div style="left:1901.9px;top:1850.9px;width:18.0px;height:43.5px;background:#3396eb;"></div>
<div style="left:1919.41px;top:1858.9px;width:2px;height:27px;background:#2a7cd0;"></div>
<span class="t" style='left:2124.3px;top:1859.4px;font:700 28.0px/28.0px "Liberation Sans","DejaVu Sans",sans-serif;color:#1c2b34;letter-spacing:0.328px;'>3 MiB</span>
<div style="left:2219.3px;top:1850.9px;width:142.3px;height:43.5px;background:#e0e3ee;"></div>
<div style="left:2219.3px;top:1858.9px;width:1.8px;height:27px;background:#3396eb;"></div>
</div>
</div>
</body></html>
